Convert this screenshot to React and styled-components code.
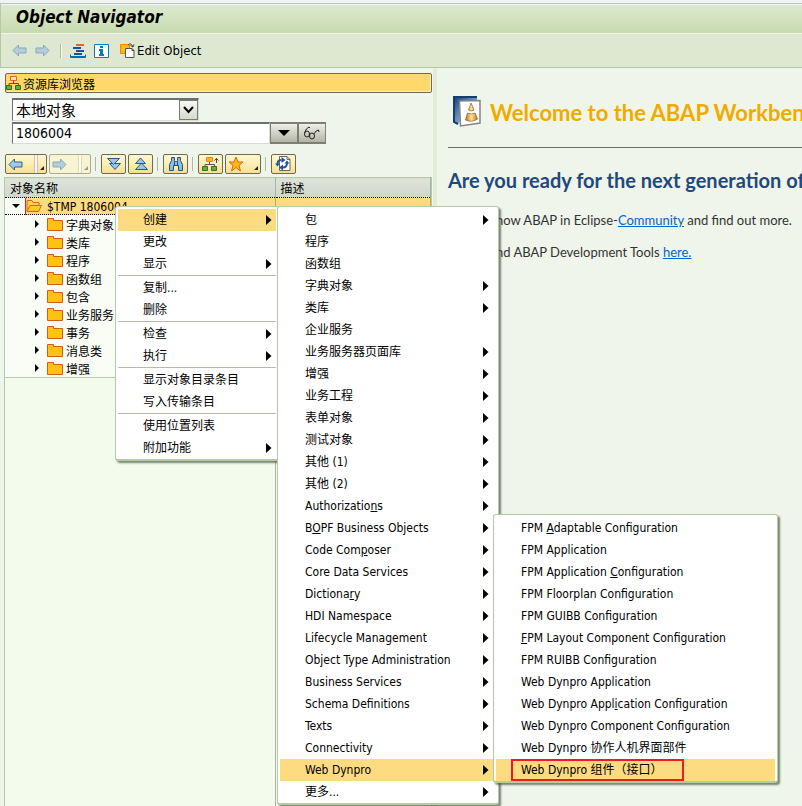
import React from "react";
import styled, { createGlobalStyle, css } from "styled-components";

const uiFont = `"DejaVu Sans Condensed", "Noto Sans", "Noto Sans CJK SC", sans-serif`;
const pageFont = `Lato, "Open Sans", sans-serif`;

const GlobalStyle = createGlobalStyle`
  * { box-sizing: border-box; }
  body { margin: 0; background: #eff5ea; }
  button, input, select { font-family: inherit; color: inherit; margin: 0; }
  svg { flex-shrink: 0; }
`;

const Page = styled.div`
  position: relative;
  display: flex;
  flex-direction: column;
  min-height: 100vh;
  overflow: hidden;
  padding-top: 3px;
  background: #eff5ea;
  color: #000;
  font: 12px/18px ${uiFont};
`;

const TitleBar = styled.header`
  height: 31px;
  padding-left: 15px;
  border: 1px solid #b5cba0;
  border-width: 1px 0 0 1px;
  box-shadow: inset 0 1px #f3f8ee, inset 0 -1px #eef5e8;
  background: linear-gradient(#dde9ce, #d4e3c2 45%, #c6daaf);
`;

const Title = styled.h1`
  margin: 0;
  font: italic bold 17px/27px ${uiFont};
`;

const AppToolbar = styled.div`
  display: flex;
  align-items: center;
  height: 34px;
  padding: 0 11px;
  border: 1px solid #b0c99e;
  border-width: 0 0 1px 1px;
  background: #dee8d0;
`;

const ToolButton = styled.button`
  display: flex;
  align-items: center;
  gap: 2px;
  padding: 0;
  margin-right: ${(p) => p.$gap || 8}px;
  border: 0;
  background: none;
  font-size: 13px;
`;

const Divider = styled.span`
  width: 2px;
  height: ${(p) => p.$height || 14}px;
  margin-right: ${(p) => p.$gap || 8}px;
  border-left: 1px solid #a9bf98;
  border-right: 1px solid #f4f9ef;
`;

const Workspace = styled.main`
  display: flex;
  flex: 1;
`;

const Browser = styled.section`
  display: flex;
  flex-direction: column;
  flex: 0 0 433px;
  padding: 5px 1px 0 4px;
`;

const BrowserTitle = styled.h2`
  display: flex;
  align-items: center;
  gap: 1px;
  height: 20px;
  margin: 0 0 5px 1px;
  border: 1px solid #6f6a50;
  border-radius: 2px;
  background: #ffd869;
  box-shadow: inset -1px -1px #ffefb8;
  font: 12px/18px ${uiFont};
`;

const BrowserName = styled.span`
  padding-top: 4px;
`;

const Fields = styled.div`
  display: flex;
  flex-direction: column;
  padding-left: 8px;
`;

const SelectWrap = styled.div`
  display: flex;
  position: relative;
  width: 187px;
  height: 23px;
`;

const ObjectSelect = styled.select`
  appearance: none;
  width: 100%;
  padding: 1px 24px 0 3px;
  border: 1px solid #d8ddd2;
  border-top: 2px solid #6e6e6e;
  border-left: 1px solid #6e6e6e;
  border-radius: 0;
  background: #fff;
  font-size: 15px;
`;

const SelectMark = styled.span`
  position: absolute;
  right: 1px;
  top: 2px;
  bottom: 1px;
  display: grid;
  place-items: center;
  width: 19px;
  border: 1px solid #777b70;
  background: linear-gradient(#f8f8f2, #d6d9cd);
  pointer-events: none;
`;

const NameRow = styled.div`
  display: flex;
  align-items: center;
  height: 23px;
`;

const NameInput = styled.input`
  width: 258px;
  height: 22px;
  padding: 0 3px;
  border: 1px solid #d8ddd2;
  border-top: 2px solid #6e6e6e;
  border-left: 1px solid #6e6e6e;
  background: #fff;
  font-size: 14px;
`;

const GreyButton = styled.button`
  display: grid;
  place-items: center;
  width: 28px;
  height: 22px;
  padding: 0;
  border: 2px solid #7e7e78;
  border-width: 2px 1px;
  background: linear-gradient(#efefe6, #b3b5a4);
`;

const BrowserTools = styled.div`
  display: flex;
  align-items: center;
  height: 20px;
  margin: 10px 0 3px 1px;
`;

const GoldButton = styled.button`
  display: flex;
  align-items: center;
  justify-content: ${(p) => (p.$menu ? "space-between" : "center")};
  width: ${(p) => p.$width || 25}px;
  height: 20px;
  padding: 0 2px;
  margin-right: ${(p) => p.$gap || 2}px;
  border: 1px solid #706b50;
  border-radius: 2px;
  background: linear-gradient(#fff7d2, #fdeeb4 50%, #f6df93);
  ${(p) =>
    p.disabled &&
    css`
      border-color: #a9ac8e;
      background: #f8f4d2;
    `}
`;

const SplitMark = styled.span`
  display: flex;
  align-items: flex-end;
  justify-content: flex-end;
  width: 10px;
  height: 18px;
  padding-bottom: 3px;
  ${(p) =>
    p.$line &&
    css`
      border-left: 1px solid ${p.$line};
      box-shadow: inset 2px 0 #fffbe6, inset 3px 0 ${p.$line};
    `}
`;

const TreePane = styled.div`
  flex: 1;
  border: 1px solid #b7c6ae;
  border-width: 0 1px;
  background: linear-gradient(to right, transparent 270px, #a9b3a1 270px 271px, transparent 271px) #f3fbec;
`;

const Tree = styled.table`
  width: 100%;
  border-collapse: collapse;
  table-layout: fixed;
  border: 1px solid #b7caa8;
  border-width: 1px 0;
  background: #f9fdf5;

  th {
    height: 19px;
    padding: 3px 5px 0;
    border-right: 1px solid #a9b3a1;
    background: linear-gradient(#dfe4da, #cfd6ca);
    font-weight: normal;
    line-height: 16px;
    text-align: left;
  }
  td {
    height: 16px;
    padding: 0;
  }
`;

const RootRow = styled.tr`
  td {
    background: #fddb80;
    border-top: 1px dotted #000;
    border-bottom: 1px dotted #000;
    border-right: 1px solid #b5a774;
  }
  td:first-child {
    background: linear-gradient(to right, #f9fdf5 20px, #e2231a 20px 21px, #fddb80 21px);
  }
`;

const Node = styled.div`
  display: flex;
  align-items: center;
  gap: ${(p) => (p.$root ? 6 : 7)}px;
  height: ${(p) => (p.$root ? 16 : 18)}px;
  padding-left: ${(p) => (p.$root ? 7 : 29)}px;
  white-space: nowrap;
`;

const NodeLabel = styled.span`
  margin-left: ${(p) => (p.$root ? -1 : -4)}px;
  padding-top: ${(p) => (p.$root ? 2 : 3)}px;
`;

const Splitter = styled.div`
  flex: 0 0 4px;
  background: #e3ebd9;
`;

const Welcome = styled.section`
  flex: 1;
  min-width: 0;
  overflow: hidden;
  padding: 27px 0 0 11px;
  color: #333;
  font: 13px/20px ${pageFont};
  white-space: nowrap;
`;

const WelcomeHead = styled.div`
  display: flex;
  align-items: center;
  gap: 9px;
  height: 53px;
  padding: 0 0 20px 5px;
  border-bottom: 1px solid #6c6c6c;
`;

const WelcomeTitle = styled.h2`
  margin: 0;
  padding-top: 3px;
  color: #f0ab00;
  font: bold 22px/32px ${pageFont};
`;

const Question = styled.h3`
  margin: 18px 0 16px;
  color: #1f497d;
  font: bold 20px/28px ${pageFont};
`;

const Line = styled.p`
  margin: 0 0 12px;
  padding-left: 48px;
`;

const PageLink = styled.a`
  color: #0563c9;
`;

const Menu = styled.ul`
  position: absolute;
  left: ${(p) => p.$left}px;
  top: ${(p) => p.$top}px;
  width: ${(p) => p.$width}px;
  margin: 0;
  padding: 2px 2px 0;
  list-style: none;
  border: 1px solid #b5cca2;
  border-bottom-width: 2px;
  border-radius: 3px;
  background: #fff;
  box-shadow: 2px 2px 2px rgba(60, 70, 55, 0.65);
`;

const MenuEntry = styled.li`
  ${(p) =>
    p.$divided &&
    css`
      padding-top: 1px;
      border-top: 1px solid #b3bda9;
    `}
`;

const MenuButton = styled.button`
  display: flex;
  align-items: center;
  justify-content: space-between;
  width: 100%;
  height: 22px;
  padding: 0 ${(p) => p.$end}px 0 25px;
  border: 0;
  background: ${(p) => (p.$active ? "#fddb80" : "none")};
  font-size: 12px;
  line-height: 22px;
  text-align: left;
  white-space: nowrap;
`;

const MenuLabel = styled.span`
  ${(p) =>
    p.$marked &&
    css`
      margin-left: -10px;
      padding: 0 19px 0 8px;
      line-height: 18px;
      border: 2px solid #ed1c24;
    `}
`;

const Arrow = () => (
  <svg width="6" height="10" viewBox="0 0 6 10"><path d="M0 0l5.500 5L0 10z" fill="#000" /></svg>
);
const TreeArrow = () => (
  <svg width="6" height="8" viewBox="0 0 6 8"><path d="M1 0l4 4-4 4z" fill="#000" /></svg>
);
const Corner = ({ fill = "#222" }) => (
  <svg width="4" height="4" viewBox="0 0 4 4"><path d="M4 0v4H0z" fill={fill} /></svg>
);
const Caret = ({ w = 12 }) => (
  <svg width={w} height={w / 2} viewBox="0 0 12 6"><path d="M0 0h12L6 6z" fill="#000" /></svg>
);
const NavArrow = ({ right, faded }) => (
  <svg width="15" height="13" viewBox="0 0 15 13">
    <path
      d={right ? "M14 6.500L8.500 1v3H1v5h7.500v3z" : "M1 6.500L6.500 1v3H14v5H6.500v3z"}
      fill={faded ? "#b7cddb" : "#a5c8ea"}
      stroke={faded ? "#87a9bc" : "#2e6592"}
    />
  </svg>
);
const Hierarchy = ({ up }) => (
  <svg width={up ? 18 : 16} height="15" viewBox={up ? "0 0 18 15" : "0 0 16 15"} fill="none">
    <path d="M7.500 5v3M3 10V7.500h9.500V10" stroke="#555" />
    <path d="M4.500.500h6v4h-6z" fill={up ? "#fdb813" : "#fff0a0"} stroke={up ? "#e08a1a" : "#e4602a"} />
    <path d="M.5 9.500h5v4h-5zM9.500 9.500h5v4h-5z" fill="#68ad35" stroke="#35702a" />
    {up && <path d="M14.500 6V1.500M12.500 3.500l2-2 2 2" stroke="#444" />}
  </svg>
);
const Stack = () => (
  <svg width="16" height="16" viewBox="0 0 16 16">
    <path d="M6 1h8v2H6z" fill="#e0642e" />
    <path d="M3 4h8v2H3zM6 7h8v2H6zM4 10h8v2H4z" fill="#234f91" />
    <path d="M.5 11.500v3h15v-3M1 13.500h14" fill="none" stroke="#006faf" />
  </svg>
);
const Info = () => (
  <svg width="15" height="14" viewBox="0 0 15 14">
    <path d="M.5.500h14v13H.5z" fill="#fff" stroke="#007dbd" />
    <path d="M6 2h3v2H6zM5 5h4v5h1v2H5v-2h1V7H5z" fill="#007dbd" />
  </svg>
);
const EditIcon = () => (
  <svg width="15" height="15" viewBox="0 0 15 15" fill="none">
    <path d="M.5 1.500h9v9h-9z" fill="#fdb813" stroke="#f08a00" />
    <path d="M5.500 5.500H12l2 2v7H5.500z" fill="#fff" stroke="#555" />
    <path d="M12 5.500v2h2M8 2q3-3 5 2M10.500 2.500L13 4l1-2.500" stroke="#444" />
  </svg>
);
const Check = () => (
  <svg width="11" height="8" viewBox="0 0 11 8"><path d="M1 1l4.500 5L10 1" fill="none" stroke="#000" strokeWidth="2" /></svg>
);
const Glasses = () => (
  <svg width="18" height="14" viewBox="0 0 18 14" fill="none" stroke="#222">
    <ellipse cx="4" cy="8" rx="2.500" ry="3" /><ellipse cx="9" cy="10" rx="2.500" ry="3" />
    <path d="M1.500 7Q3 2 6 1l1 1M11 8q2-4 4.500-4l.5 2" />
  </svg>
);
const Chevrons = ({ up }) => (
  <svg width="16" height="14" viewBox="0 0 16 14" fill="#9cc4e6" stroke="#235b8e">
    {up ? (
      <>
        <path d="M8.500 6l6 6.500h-12z" />
        <path d="M7.500 1l5 5.500h-10z" />
      </>
    ) : (
      <>
        <path d="M3.500 6.500h11l-5.500 6z" />
        <path d="M1.500 1.500h12l-6 6z" />
      </>
    )}
  </svg>
);
const Binoculars = () => (
  <svg width="16" height="16" viewBox="0 0 16 16" fill="#8fbbe0" stroke="#1e5688">
    <path d="M3.500 1.500h3v3l1 1h1l1-1v-3h3v3l2 4v6h-4v-5h-5v5h-4v-6l2-4z" />
    <path d="M6.500 5v4M9.500 5v4" />
  </svg>
);
const Star = () => (
  <svg width="16" height="16" viewBox="0 0 16 16">
    <path d="M8 1l2 5h5l-4 3.500 1.500 5.500L8 11.500 3.500 15 5 9.500 1 6h5z" fill="#fdb913" stroke="#dc6518" />
  </svg>
);
const Refresh = () => (
  <svg width="17" height="16" viewBox="0 0 17 16" fill="none">
    <path d="M4.500.500H12l3 3v11H4.500z" fill="#fff" stroke="#666" /><path d="M12 .5v3h3" stroke="#666" />
    <path d="M2.500 8q0-4 4-4M12 7q0 4.500-4.500 4.500" stroke="#2454a0" strokeWidth="2" />
    <path d="M6.500 1l4 3-4 3zM8 8.500v6l-4-3zM0 7.500h5L2.500 10.500zM9.500 7.500h5L12 4.500z" fill="#2454a0" />
  </svg>
);
const Folder = ({ open }) =>
  open ? (
    <svg width="16" height="14" viewBox="0 0 16 14" fill="#ffd24a" stroke="#d96918">
      <path d="M1 12.500V1.500h5l1 2h6v3" /><path d="M1 12.500l3-6h11.500l-3 6z" fill="#ffc926" />
    </svg>
  ) : (
    <svg width="16" height="13" viewBox="0 0 16 13"><path d="M.5.500h6v2h9v10H.5z" fill="#ffc20e" stroke="#d15e17" /></svg>
  );
const WorkbenchLogo = () => (
  <svg width="28" height="31" viewBox="0 0 28 31">
    <defs>
      <linearGradient id="navy" x2="1" y2="1"><stop stopColor="#123f70" /><stop offset=".6" stopColor="#7aa6cb" /><stop offset="1" stopColor="#123f70" /></linearGradient>
      <linearGradient id="brass"><stop stopColor="#bf7416" /><stop offset=".5" stopColor="#ffe59a" /><stop offset="1" stopColor="#bf7416" /></linearGradient>
    </defs>
    <path d="M0 1h24v3L5 28 0 26z" fill="url(#navy)" />
    <path d="M0 1h24M1 1v25l4 2" fill="none" stroke="#123f70" strokeWidth="2" />
    <path d="M6.500 5L27 4.500V27L7.500 30z" fill="#fff" stroke="#858585" strokeWidth="1.500" />
    <path d="M18 7l3 7q-3 2-5.500 0zM14.500 17q4 2 7.500 0l2.500 6q-6 4-12 1z" fill="url(#brass)" stroke="#8b5a20" strokeWidth=".7" />
  </svg>
);

const contextItems = [
  { text: "创建", sub: true, active: true },
  { text: "更改" },
  { text: "显示", sub: true },
  { text: "复制...", divided: true },
  { text: "删除" },
  { text: "检查", sub: true, divided: true },
  { text: "执行", sub: true },
  { text: "显示对象目录条目", divided: true },
  { text: "写入传输条目" },
  { text: "使用位置列表", divided: true },
  { text: "附加功能", sub: true },
];

const createItems = [
  { text: "包", sub: true },
  { text: "程序" },
  { text: "函数组" },
  { text: "字典对象", sub: true },
  { text: "类库", sub: true },
  { text: "企业服务" },
  ...[
    "业务服务器页面库", "增强", "业务工程", "表单对象", "测试对象", "其他 (1)", "其他 (2)",
    "Authorizatio_ns", "B_OPF Business Objects", "Code Com_poser", "Core Data Services",
    "Dictiona_ry", "HDI Namespace", "Lifecycle Management", "Object Type Administration",
    "Business Services", "Schema Definitions", "Texts", "Connectivity",
  ].map((text) => ({ text, sub: true })),
  { text: "Web Dynpro", sub: true, active: true },
  { text: "更多...", sub: true },
];

const dynproItems = [
  "FPM _Adaptable Configuration", "FPM Application", "FPM Application _Configuration",
  "FPM Floorplan Configuration", "FPM GUIBB Configuration", "_FPM Layout Component Configuration",
  "FPM RUIBB Confi_guration", "Web Dynpro Application", "Web Dynpro Appl_ication Configuration",
  "Web Dynpro Component Configuration", "Web Dynpro 协作人机界面部件",
].map((text) => ({ text }));
dynproItems.push({ text: "Web Dynpro 组件（接口）", active: true, marked: true });

const treeNodes = ["字典对象", "类库", "程序", "函数组", "包含", "业务服务", "事务", "消息类", "增强"];

function Mnemonic({ text }) {
  const at = text.indexOf("_");
  if (at < 0) return text;
  return <>{text.slice(0, at)}<u>{text[at + 1]}</u>{text.slice(at + 2)}</>;
}

function PopupMenu({ items, end = 7, ...place }) {
  return (
    <Menu {...place}>
      {items.map((item) => (
        <MenuEntry key={item.text} $divided={item.divided}>
          <MenuButton $active={item.active} $end={end}>
            <MenuLabel $marked={item.marked}><Mnemonic text={item.text} /></MenuLabel>
            {item.sub && <Arrow />}
          </MenuButton>
        </MenuEntry>
      ))}
    </Menu>
  );
}

export default function App() {
  return (
    <Page>
      <GlobalStyle />
      <TitleBar><Title>Object Navigator</Title></TitleBar>
      <AppToolbar>
        <ToolButton aria-label="Back"><NavArrow faded /></ToolButton>
        <ToolButton aria-label="Forward" $gap={10}><NavArrow right faded /></ToolButton>
        <Divider />
        <ToolButton aria-label="Object list"><Stack /></ToolButton>
        <ToolButton aria-label="Information" $gap={11}><Info /></ToolButton>
        <ToolButton><EditIcon />Edit Object</ToolButton>
      </AppToolbar>
      <Workspace>
        <Browser>
          <BrowserTitle><Hierarchy /><BrowserName>资源库浏览器</BrowserName></BrowserTitle>
          <Fields>
            <SelectWrap>
              <ObjectSelect aria-label="对象类型"><option>本地对象</option></ObjectSelect>
              <SelectMark><Check /></SelectMark>
            </SelectWrap>
            <NameRow>
              <NameInput aria-label="对象名称" defaultValue="1806004" />
              <GreyButton aria-label="History"><Caret /></GreyButton>
              <GreyButton aria-label="Display"><Glasses /></GreyButton>
            </NameRow>
          </Fields>
          <BrowserTools>
            <GoldButton aria-label="Back" $width={42} $menu><NavArrow /><SplitMark $line="#dcb6c4"><Corner /></SplitMark></GoldButton>
            <GoldButton aria-label="Forward" $width={42} $gap={4} $menu disabled><NavArrow right faded /><SplitMark $line="#dcdcc0"><Corner fill="#999" /></SplitMark></GoldButton>
            <Divider $gap={4} />
            <GoldButton aria-label="Expand"><Chevrons /></GoldButton>
            <GoldButton aria-label="Collapse" $gap={4}><Chevrons up /></GoldButton>
            <Divider $gap={4} />
            <GoldButton aria-label="Find" $gap={4}><Binoculars /></GoldButton>
            <Divider $gap={4} />
            <GoldButton aria-label="Higher level"><Hierarchy up /></GoldButton>
            <GoldButton aria-label="Favorites" $width={36} $gap={4} $menu><Star /><SplitMark><Corner /></SplitMark></GoldButton>
            <Divider $gap={4} />
            <GoldButton aria-label="Refresh"><Refresh /></GoldButton>
          </BrowserTools>
          <TreePane>
            <Tree>
              <colgroup><col width="270" /><col /></colgroup>
              <thead><tr><th>对象名称</th><th>描述</th></tr></thead>
              <tbody>
                <RootRow>
                  <td><Node $root><Caret w={8} /><Folder open /><NodeLabel $root>$TMP 1806004</NodeLabel></Node></td>
                  <td />
                </RootRow>
                {treeNodes.map((name) => (
                  <tr key={name}>
                    <td><Node><TreeArrow /><Folder /><NodeLabel>{name}</NodeLabel></Node></td>
                    <td />
                  </tr>
                ))}
              </tbody>
            </Tree>
          </TreePane>
        </Browser>
        <Splitter />
        <Welcome>
          <WelcomeHead><WorkbenchLogo /><WelcomeTitle>Welcome to the ABAP Workben</WelcomeTitle></WelcomeHead>
          <Question>Are you ready for the next generation of</Question>
          <Line>now ABAP in Eclipse-<PageLink href="#community">Community</PageLink> and find out more.</Line>
          <Line>nd ABAP Development Tools <PageLink href="#tools">here.</PageLink></Line>
        </Welcome>
      </Workspace>
      <PopupMenu items={contextItems} $left={115} $top={206} $width={164} end={4} />
      <PopupMenu items={createItems} $left={277} $top={206} $width={222} />
      <PopupMenu items={dynproItems} $left={493} $top={514} $width={285} />
    </Page>
  );
}
